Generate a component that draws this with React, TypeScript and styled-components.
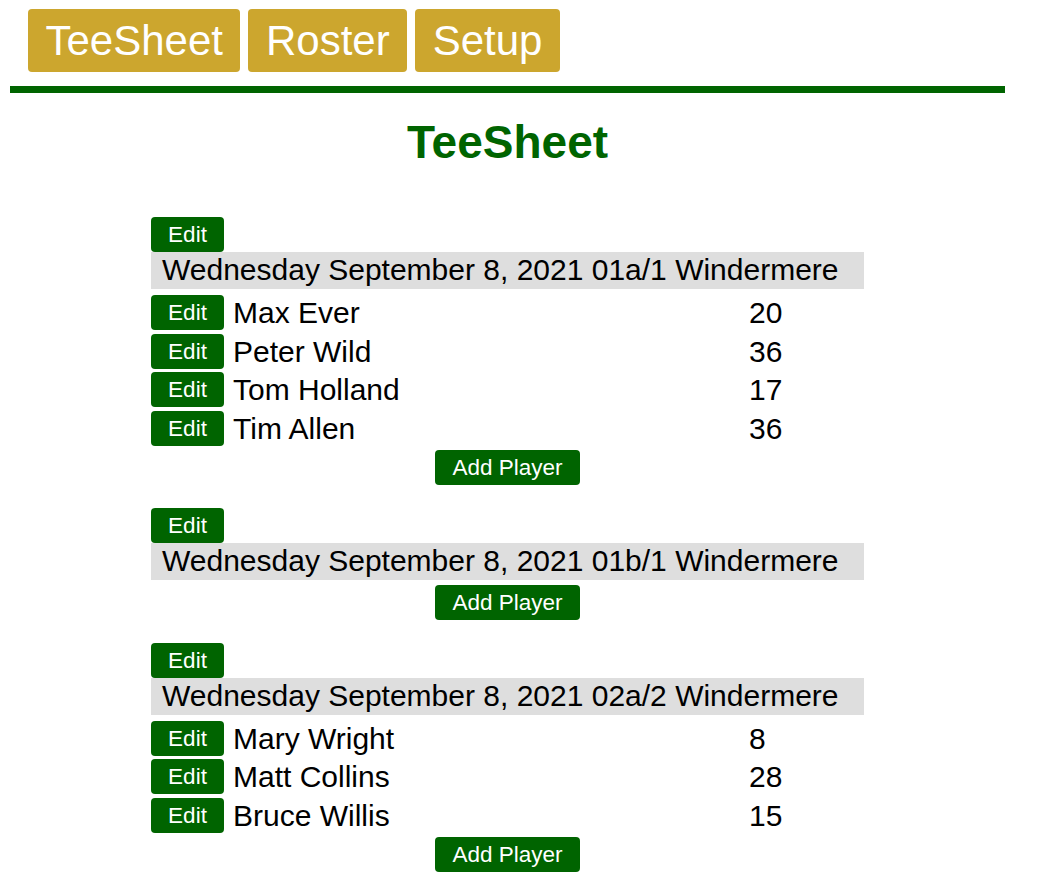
import React from "react";
import styled, { createGlobalStyle } from "styled-components";

const GlobalStyle = createGlobalStyle`
  html, body {
    margin: 0;
    padding: 0;
    background: #ffffff;
    font-family: "Liberation Sans", Arial, sans-serif;
    color: #000;
  }
`;

const Page = styled.div`
  width: 995px;
  margin-left: 10px;
  padding-top: 9px;
  padding-bottom: 20px;
`;

const Nav = styled.nav`
  display: flex;
  gap: 8px;
  padding-left: 18px;
`;

const NavButton = styled.button`
  font-family: "Liberation Sans", Arial, sans-serif;
  font-size: 42px;
  line-height: 48px;
  height: 63px;
  padding: 0 17.5px;
  background: #cca62e;
  color: #ffffff;
  border: none;
  border-radius: 4px;
  cursor: pointer;
`;

const Rule = styled.hr`
  margin: 14px 0 0 0;
  height: 7px;
  border: none;
  background: #006400;
`;

const Title = styled.h1`
  margin: 23px 0 0 0;
  text-align: center;
  color: #006400;
  font-size: 46px;
  line-height: 53px;
  font-weight: bold;
`;

const Sheet = styled.div`
  width: 713px;
  margin: 48px auto 0 auto;
  display: flex;
  flex-direction: column;
  gap: 23px;
`;

const Group = styled.section`
  display: flex;
  flex-direction: column;
`;

const GreenButton = styled.button`
  font-family: "Liberation Sans", Arial, sans-serif;
  font-size: 22.5px;
  line-height: 26px;
  height: 35px;
  padding: 1px 17px 0 17px;
  background: #006400;
  color: #ffffff;
  border: none;
  border-radius: 4px;
  cursor: pointer;
  white-space: nowrap;
`;

const TopEdit = styled(GreenButton)`
  align-self: flex-start;
  width: 73px;
  padding-left: 0;
  padding-right: 0;
`;

const HeaderBar = styled.div`
  background: #dedede;
  font-size: 30px;
  line-height: 35px;
  box-sizing: border-box;
  height: 37px;
  padding: 0 11px;
`;

const Players = styled.div`
  display: flex;
  flex-direction: column;
  gap: 3.5px;
  margin-top: 6px;
`;

const PlayerRow = styled.div`
  display: grid;
  grid-template-columns: 73px 507px 115px;
  column-gap: 9px;
  align-items: center;
  height: 35px;
  font-size: 30px;
`;

const RowEdit = styled(GreenButton)`
  width: 73px;
  padding-left: 0;
  padding-right: 0;
`;

const Cell = styled.span`
  line-height: 35px;
  white-space: nowrap;
`;

const AddPlayer = styled(GreenButton)<{ $gap: number }>`
  align-self: center;
  margin-top: ${(p) => p.$gap}px;
  width: 145px;
  padding-left: 0;
  padding-right: 0;
`;

type Player = { name: string; hcp: number };
type Tee = { label: string; players: Player[] };

const tees: Tee[] = [
  {
    label: "Wednesday September 8, 2021 01a/1 Windermere",
    players: [
      { name: "Max Ever", hcp: 20 },
      { name: "Peter Wild", hcp: 36 },
      { name: "Tom Holland", hcp: 17 },
      { name: "Tim Allen", hcp: 36 },
    ],
  },
  {
    label: "Wednesday September 8, 2021 01b/1 Windermere",
    players: [],
  },
  {
    label: "Wednesday September 8, 2021 02a/2 Windermere",
    players: [
      { name: "Mary Wright", hcp: 8 },
      { name: "Matt Collins", hcp: 28 },
      { name: "Bruce Willis", hcp: 15 },
    ],
  },
];

export default function App() {
  return (
    <>
      <GlobalStyle />
      <Page>
        <Nav>
          <NavButton>TeeSheet</NavButton>
          <NavButton>Roster</NavButton>
          <NavButton>Setup</NavButton>
        </Nav>
        <Rule />
        <Title>TeeSheet</Title>
        <Sheet>
          {tees.map((t) => (
            <Group key={t.label}>
              <TopEdit>Edit</TopEdit>
              <HeaderBar>{t.label}</HeaderBar>
              {t.players.length > 0 && (
                <Players>
                  {t.players.map((p) => (
                    <PlayerRow key={p.name}>
                      <RowEdit>Edit</RowEdit>
                      <Cell>{p.name}</Cell>
                      <Cell>{p.hcp}</Cell>
                    </PlayerRow>
                  ))}
                </Players>
              )}
              <AddPlayer $gap={t.players.length > 0 ? 4 : 5}>Add Player</AddPlayer>
            </Group>
          ))}
        </Sheet>
      </Page>
    </>
  );
}
